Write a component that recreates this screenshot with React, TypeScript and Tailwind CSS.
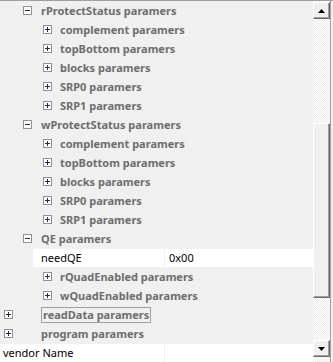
import React from "react";

type Cat = { kind: "cat"; level: 0 | 1 | 2; open: boolean; label: string; focus?: boolean };
type Prop = { kind: "prop"; label: string; value: string; top?: boolean };
type Row = Cat | Prop;

const rows: Row[] = [
  { kind: "cat", level: 1, open: true, label: "rProtectStatus paramers" },
  { kind: "cat", level: 2, open: false, label: "complement paramers" },
  { kind: "cat", level: 2, open: false, label: "topBottom paramers" },
  { kind: "cat", level: 2, open: false, label: "blocks paramers" },
  { kind: "cat", level: 2, open: false, label: "SRP0 paramers" },
  { kind: "cat", level: 2, open: false, label: "SRP1 paramers" },
  { kind: "cat", level: 1, open: true, label: "wProtectStatus paramers" },
  { kind: "cat", level: 2, open: false, label: "complement paramers" },
  { kind: "cat", level: 2, open: false, label: "topBottom paramers" },
  { kind: "cat", level: 2, open: false, label: "blocks paramers" },
  { kind: "cat", level: 2, open: false, label: "SRP0 paramers" },
  { kind: "cat", level: 2, open: false, label: "SRP1 paramers" },
  { kind: "cat", level: 1, open: true, label: "QE paramers" },
  { kind: "prop", label: "needQE", value: "0x00" },
  { kind: "cat", level: 2, open: false, label: "rQuadEnabled paramers" },
  { kind: "cat", level: 2, open: false, label: "wQuadEnabled paramers" },
  { kind: "cat", level: 0, open: false, label: "readData paramers", focus: true },
  { kind: "cat", level: 0, open: false, label: "program paramers" },
  { kind: "prop", label: "vendor Name", value: "", top: true },
];

const boxPad = { 0: "ml-[4px]", 1: "ml-[23px]", 2: "ml-[43px]" };
const textPad = { 0: "ml-[28px]", 1: "ml-[9px]", 2: "ml-[8px]" };

// little +/- expander box
const Expander = ({ open }: { open: boolean }) => (
  <div className="relative w-[9px] h-[9px] shrink-0 border border-[#919191] bg-white">
    <div className="absolute left-[1px] top-[3px] w-[5px] h-[1px] bg-[#1f2d5c]" />
    {!open && <div className="absolute left-[3px] top-[1px] w-[1px] h-[5px] bg-[#1f2d5c]" />}
  </div>
);

const Arrow = ({ up }: { up: boolean }) => (
  <div className="h-[17px] shrink-0 flex items-center justify-center bg-[#f0f0f0] border border-t-white border-l-white border-r-[#696969] border-b-[#696969] shadow-[inset_-1px_-1px_0_#a0a0a0]">
    <svg width="7" height="4" viewBox="0 0 7 4">
      {up ? <path d="M3.5 0 L7 4 L0 4 Z" fill="#000" /> : <path d="M0 0 L7 0 L3.5 4 Z" fill="#000" />}
    </svg>
  </div>
);

const track = "[background-image:repeating-conic-gradient(#ffffff_0%_25%,#ececec_0%_50%)] [background-size:2px_2px]";

export default function App() {
  return (
    <div className="w-[333px] h-[362px] overflow-hidden bg-[#f0f0f0] border-t border-[#a0a0a0] flex font-['Noto_Sans',sans-serif] text-[11px]">
      <div className="w-[313px] flex flex-col">
        {rows.map((r, i) =>
          r.kind === "cat" ? (
            <div key={i} className="h-[19px] shrink-0 flex items-center">
              <div className={boxPad[r.level]}>
                <Expander open={r.open} />
              </div>
              <span
                className={`${textPad[r.level]} font-bold text-[#6d6d6d] whitespace-nowrap leading-[14px] ${
                  r.focus ? "-ml-[2px] border border-[#a0a0a0] px-[1px]" : ""
                }`}
              >
                {r.label}
              </span>
            </div>
          ) : (
            <div key={i} className={`h-[19px] shrink-0 flex pt-[1px] ${r.top ? "" : "pl-[33px]"}`}>
              <div
                className={`bg-white h-[18px] flex items-center text-black whitespace-nowrap ${
                  r.top ? "w-[164px] pl-[3px]" : "w-[131px] pl-[8px]"
                }`}
              >
                {r.label}
              </div>
              <div className="w-[1px]" />
              <div className="flex-1 bg-white h-[18px] flex items-center pl-[4px] text-black">{r.value}</div>
            </div>
          )
        )}
      </div>
      <div className={`w-[17px] flex flex-col pt-[1px] ${track}`}>
        <Arrow up />
        <div className="h-[104px] shrink-0" />
        <div className="h-[175px] shrink-0 bg-[#f0f0f0] border border-t-white border-l-white border-r-[#696969] border-b-[#696969] shadow-[inset_-1px_-1px_0_#a0a0a0]" />
        <div className="h-[42px] shrink-0" />
        <Arrow up={false} />
      </div>
      <div className="w-[1px] bg-[#a0a0a0]" />
      <div className="w-[2px] bg-[#f0f0f0]" />
    </div>
  );
}
